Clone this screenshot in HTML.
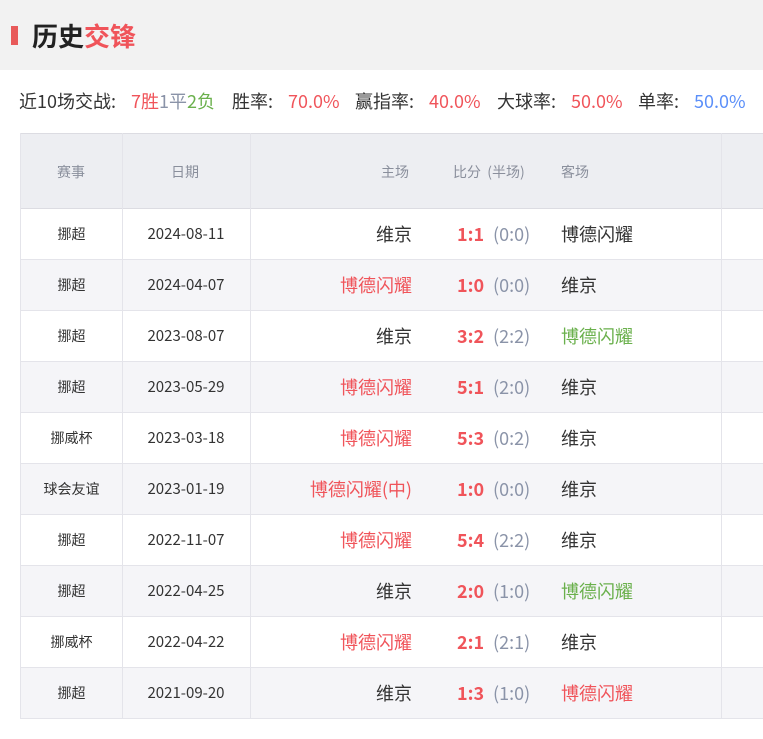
<!DOCTYPE html><html><head><meta charset="utf-8"><style>
*{margin:0;padding:0;box-sizing:border-box}
body{width:763px;height:739px;background:#fff;font-family:"Noto Sans CJK SC","Liberation Sans",sans-serif;position:relative;overflow:hidden;color:#333}
.hd{position:absolute;left:0;top:0;width:763px;height:70px;background:#f2f2f2}
.bar{position:absolute;left:11px;top:26px;width:7px;height:19px;background:#e85a5a}
.tt{position:absolute;left:32px;top:16px;font-size:26px;font-weight:bold;color:#222;line-height:40px}
.s{position:absolute;top:88px;font-size:18px;line-height:26px;color:#333;white-space:nowrap}
.r{color:#f0545a}.g{color:#6ab04c}.b{color:#5b8ff9}.gy{color:#8a93a8}
.tb{position:absolute;left:20px;top:133px;width:743px;height:586px;border-left:1px solid #e4e4ea}
.h{position:absolute;left:0;top:0;width:743px;height:76px;background:#edeef2;border-top:1px solid #dcdce2;border-bottom:1px solid #dcdce2}
.row{position:absolute;left:0;width:743px;height:51px;border-bottom:1px solid #e4e4ea}
.vl{position:absolute;top:0;width:1px;height:586px;background:#e4e4ea}
.c{position:absolute;white-space:pre;top:0;line-height:50px}
.hc{font-size:14px;color:#8a8f9c;line-height:76px}
</style></head><body>
<div class="hd"><div class="bar"></div><div class="tt">历史<span class="r">交锋</span></div></div>
<div class="s" style="left:19px">近10场交战:</div>
<div class="s" style="left:131px"><span class="r">7胜</span><span class="gy">1平</span><span class="g">2负</span></div>
<div class="s" style="left:232px">胜率:</div><div class="s r" style="left:288px">70.0%</div>
<div class="s" style="left:355px">赢指率:</div><div class="s r" style="left:429px">40.0%</div>
<div class="s" style="left:497px">大球率:</div><div class="s r" style="left:571px">50.0%</div>
<div class="s" style="left:638px">单率:</div><div class="s b" style="left:694px">50.0%</div>
<div class="tb">
<div class="h">
<div class="c hc" style="left:36px">赛事</div>
<div class="c hc" style="left:150px">日期</div>
<div class="c hc" style="left:360px">主场</div>
<div class="c hc" style="left:432px">比分  (半场)</div>
<div class="c hc" style="left:540px">客场</div>
</div>
<div id="rows"></div>
<div class="vl" style="left:101px"></div>
<div class="vl" style="left:229px"></div>
<div class="vl" style="left:700px"></div>
</div>
<script>
var d=[["挪超","2024-08-11","维京","","1:1","(0:0)","博德闪耀",""],
["挪超","2024-04-07","博德闪耀","r","1:0","(0:0)","维京",""],
["挪超","2023-08-07","维京","","3:2","(2:2)","博德闪耀","g"],
["挪超","2023-05-29","博德闪耀","r","5:1","(2:0)","维京",""],
["挪威杯","2023-03-18","博德闪耀","r","5:3","(0:2)","维京",""],
["球会友谊","2023-01-19","博德闪耀(中)","r","1:0","(0:0)","维京",""],
["挪超","2022-11-07","博德闪耀","r","5:4","(2:2)","维京",""],
["挪超","2022-04-25","维京","","2:0","(1:0)","博德闪耀","g"],
["挪威杯","2022-04-22","博德闪耀","r","2:1","(2:1)","维京",""],
["挪超","2021-09-20","维京","","1:3","(1:0)","博德闪耀","r"]];
var h="";d.forEach(function(x,i){var t=76+i*51;
h+='<div class="row" style="top:'+t+'px;background:'+(i%2?'#f5f5f8':'#fff')+'">'+
'<div class="c" style="left:0;width:101px;text-align:center;font-size:14px;color:#333">'+x[0]+'</div>'+
'<div class="c" style="left:101px;width:128px;text-align:center;font-size:15px;color:#333">'+x[1]+'</div>'+
'<div class="c '+x[3]+'" style="right:352px;font-size:18px">'+x[2]+'</div>'+
'<div class="c r" style="left:436px;font-size:18px;font-weight:bold">'+x[4]+'</div>'+
'<div class="c gy" style="left:472px;font-size:18px">'+x[5]+'</div>'+
'<div class="c '+x[7]+'" style="left:540px;font-size:18px">'+x[6]+'</div></div>';});
document.getElementById("rows").innerHTML=h;
</script>
</body></html>
